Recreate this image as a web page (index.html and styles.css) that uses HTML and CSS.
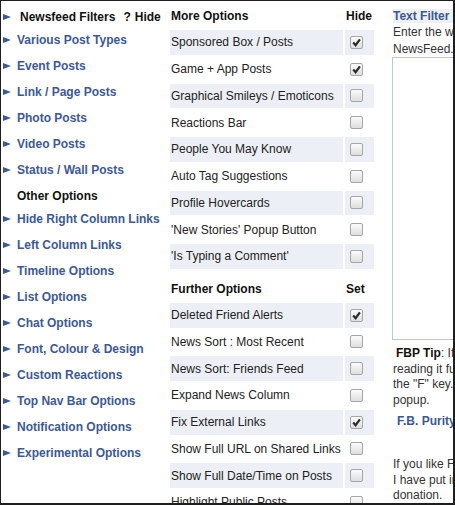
FILE: index.html
```html
<!DOCTYPE html>
<html>
<head>
<meta charset="utf-8">
<link rel="stylesheet" href="styles.css">
</head>
<body>
<div class="frame">
  <nav class="menu">
    <div class="menu-head"><span class="tri"></span><span class="head-title">Newsfeed Filters</span><span class="help">?</span><span class="hide-link">Hide</span></div>
    <a class="item"><span class="tri"></span>Various Post Types</a>
    <a class="item"><span class="tri"></span>Event Posts</a>
    <a class="item"><span class="tri"></span>Link / Page Posts</a>
    <a class="item"><span class="tri"></span>Photo Posts</a>
    <a class="item"><span class="tri"></span>Video Posts</a>
    <a class="item"><span class="tri"></span>Status / Wall Posts</a>
    <div class="menu-sub">Other Options</div>
    <a class="item"><span class="tri"></span>Hide Right Column Links</a>
    <a class="item"><span class="tri"></span>Left Column Links</a>
    <a class="item"><span class="tri"></span>Timeline Options</a>
    <a class="item"><span class="tri"></span>List Options</a>
    <a class="item"><span class="tri"></span>Chat Options</a>
    <a class="item"><span class="tri"></span>Font, Colour &amp; Design</a>
    <a class="item"><span class="tri"></span>Custom Reactions</a>
    <a class="item"><span class="tri"></span>Top Nav Bar Options</a>
    <a class="item"><span class="tri"></span>Notification Options</a>
    <a class="item"><span class="tri"></span>Experimental Options</a>
  </nav>

  <section class="opts">
    <div class="hd hd-first lbl">More Options</div><div class="hd hd-first chk">Hide</div>
    <div class="row lbl sh">Sponsored Box / Posts</div><div class="row chk sh"><span class="cb on"><svg viewBox="0 0 13 13"><path d="M3.2 6.6 L5.6 9.2 L9.9 3.4"/></svg></span></div>
    <div class="row lbl">Game + App Posts</div><div class="row chk"><span class="cb on"><svg viewBox="0 0 13 13"><path d="M3.2 6.6 L5.6 9.2 L9.9 3.4"/></svg></span></div>
    <div class="row lbl sh">Graphical Smileys / Emoticons</div><div class="row chk sh"><span class="cb"></span></div>
    <div class="row lbl">Reactions Bar</div><div class="row chk"><span class="cb"></span></div>
    <div class="row lbl sh">People You May Know</div><div class="row chk sh"><span class="cb"></span></div>
    <div class="row lbl">Auto Tag Suggestions</div><div class="row chk"><span class="cb"></span></div>
    <div class="row lbl sh">Profile Hovercards</div><div class="row chk sh"><span class="cb"></span></div>
    <div class="row lbl">'New Stories' Popup Button</div><div class="row chk"><span class="cb"></span></div>
    <div class="row lbl sh">'Is Typing a Comment'</div><div class="row chk sh"><span class="cb"></span></div>
    <div class="hd hd-second lbl">Further Options</div><div class="hd hd-second chk">Set</div>
    <div class="row lbl sh">Deleted Friend Alerts</div><div class="row chk sh"><span class="cb on"><svg viewBox="0 0 13 13"><path d="M3.2 6.6 L5.6 9.2 L9.9 3.4"/></svg></span></div>
    <div class="row lbl">News Sort : Most Recent</div><div class="row chk"><span class="cb"></span></div>
    <div class="row lbl sh">News Sort: Friends Feed</div><div class="row chk sh"><span class="cb"></span></div>
    <div class="row lbl">Expand News Column</div><div class="row chk"><span class="cb"></span></div>
    <div class="row lbl sh">Fix External Links</div><div class="row chk sh"><span class="cb on"><svg viewBox="0 0 13 13"><path d="M3.2 6.6 L5.6 9.2 L9.9 3.4"/></svg></span></div>
    <div class="row lbl">Show Full URL on Shared Links</div><div class="row chk"><span class="cb"></span></div>
    <div class="row lbl sh">Show Full Date/Time on Posts</div><div class="row chk sh"><span class="cb"></span></div>
    <div class="row lbl">Highlight Public Posts</div><div class="row chk"><span class="cb"></span></div>
  </section>

  <aside class="side">
    <div class="side-title"><span class="title-bg">Text Filter - Hide posts containing words</span></div>
    <p class="side-text">Enter the words you want to hide from your<br>NewsFeed.</p>
    <textarea class="filter-box"></textarea>
    <p class="tip"><b class="tip-label">FBP Tip</b>: If you want to read a post without<br>reading it fully expanded, hover it and press<br>the "F" key. It will open in a<br>popup.</p>
    <p class="purity">F.B. Purity Donations</p>
    <p class="donate">If you like F.B. Purity, please donate.<br>I have put in many hours, every little<br>donation.</p>
  </aside>
</div>
</body>
</html>
```

FILE: styles.css
```css
html, body {
  margin: 0;
  padding: 0;
  background: #fff;
}

.frame {
  width: 455px;
  height: 505px;
  box-sizing: border-box;
  border-style: solid;
  border-color: #1e1e1e;
  border-width: 1px 2px 2px 1px;
  overflow: hidden;
  display: flex;
  align-items: flex-start;
  font-family: "Liberation Sans", Arial, sans-serif;
  font-size: 12px;
  color: #222;
  background: #fff;
}

/* Left menu */
.menu {
  width: 169px;
  flex-shrink: 0;
  padding-left: 2px;
  box-sizing: border-box;
  display: flex;
  flex-direction: column;
}

.tri {
  display: inline-block;
  width: 0;
  height: 0;
  border-left: 8px solid #3b5998;
  border-top: 3.5px solid transparent;
  border-bottom: 3.5px solid transparent;
  flex-shrink: 0;
}

.menu-head {
  height: 26px;
  box-sizing: border-box;
  padding-top: 5px;
  display: flex;
  align-items: center;
  font-weight: bold;
  color: #111;
}

.menu-head .tri {
  margin-right: 9px;
}

.help {
  margin-left: 8px;
}

.hide-link {
  margin-left: 4px;
}

.item {
  height: 26px;
  display: flex;
  align-items: center;
  font-weight: bold;
  color: #3b5998;
  text-decoration: none;
  white-space: nowrap;
}

.item .tri {
  margin-right: 6px;
}

.menu-sub {
  height: 23px;
  box-sizing: border-box;
  padding-top: 3px;
  padding-left: 14px;
  display: flex;
  align-items: center;
  font-weight: bold;
  color: #111;
}

/* Middle options table */
.opts {
  width: 204px;
  flex-shrink: 0;
  display: grid;
  grid-template-columns: 173px 29px;
  column-gap: 2px;
  row-gap: 2px;
}

.hd {
  display: flex;
  align-items: center;
  box-sizing: border-box;
  font-weight: bold;
  color: #111;
  padding-left: 1px;
}

.hd-first {
  height: 27px;
  padding-top: 3px;
}

.hd-second {
  height: 30px;
  padding-top: 6.5px;
}

.row {
  height: 24.75px;
  display: flex;
  align-items: center;
  box-sizing: border-box;
}

.lbl.row {
  padding-left: 1px;
  white-space: nowrap;
}

.chk.row {
  padding-left: 5px;
}

.sh {
  background: #eceff5;
}

.cb {
  display: inline-block;
  width: 13px;
  height: 13px;
  box-sizing: border-box;
  border: 1px solid #a6a6a6;
  border-radius: 2px;
  background: linear-gradient(#fbfbfb, #dedede);
  position: relative;
}

.cb svg {
  position: absolute;
  left: -1px;
  top: -1px;
  width: 13px;
  height: 13px;
  fill: none;
  stroke: #2a2a2a;
  stroke-width: 2.2;
}

/* Right column */
.side {
  width: 300px;
  flex-shrink: 0;
  margin-left: 18px;
  padding-top: 6.75px;
  line-height: 16.5px;
  color: #333;
}

.side-title {
  font-weight: bold;
  color: #3b5998;
  white-space: nowrap;
  padding-left: 1px;
}

.title-bg {
  background: #eef0f4;
}

.side-text {
  margin: 0;
  padding-left: 1px;
  white-space: nowrap;
}

.filter-box {
  display: block;
  width: 280px;
  height: 283px;
  margin: 0;
  box-sizing: border-box;
  border: 1px solid #bdc7d8;
  resize: none;
  background: #fff;
}

.tip {
  margin: 6px 0 0;
  padding-left: 1px;
  line-height: 15.5px;
  white-space: nowrap;
}

.tip-label {
  color: #111;
  margin-left: 3px;
}

.purity {
  margin: 5.75px 0 0;
  padding-left: 5px;
  line-height: 15.5px;
  font-weight: bold;
  color: #3b5998;
  white-space: nowrap;
}

.donate {
  margin: 27.5px 0 0;
  padding-left: 1px;
  line-height: 15.5px;
  white-space: nowrap;
}
```
